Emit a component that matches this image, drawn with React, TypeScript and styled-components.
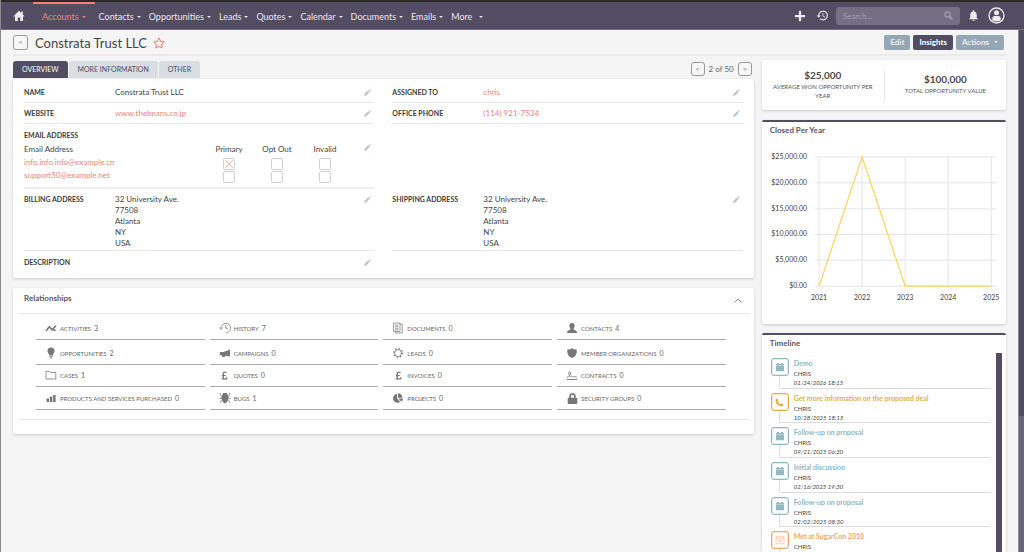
import React from "react";
import styled, { createGlobalStyle } from "styled-components";
import { FaPoundSign, FaLock, FaRegStar, FaChartPie, FaPlus, FaPhoneAlt } from "react-icons/fa";
import { MdHistory, MdNotifications } from "react-icons/md";

const PLUM = "#534d64";
const CORAL = "#f08377";
const INK = "#444444";
const LINE = "#e6e6e6";

const GlobalStyle = createGlobalStyle`
  *, *::before, *::after { box-sizing: border-box; }
  body {
    margin: 0;
    overflow: hidden;
    background: #f5f5f5;
    color: ${INK};
    font-family: Lato, "Liberation Sans", sans-serif;
    font-size: 8px;
  }
  a { color: ${CORAL}; text-decoration: none; }
  button, input { font-family: inherit; margin: 0; }
  h1, h2, ul, dl, dd, p { margin: 0; padding: 0; }
  ul { list-style: none; }
  svg { display: block; flex: none; }
`;

const Screen = styled.div`
  display: flex;
  flex-direction: column;
  height: 100vh;
  border-left: 1px solid #8c8a8c;
`;

const NavBar = styled.nav`
  display: flex;
  align-items: stretch;
  height: 30px;
  padding: 0 19px 0 12px;
  background: ${PLUM};
  border-top: 2px solid #2b2a29;
  border-bottom: 1px solid #756f88;
  flex: none;
`;

const HomeLink = styled.a`
  display: flex;
  align-items: center;
  width: 20px;
  color: #ececf0;
`;

const NavLink = styled.a<{ $active?: boolean; $wide?: boolean }>`
  display: flex;
  align-items: center;
  gap: ${(p) => (p.$wide ? 7 : 3)}px;
  padding: ${(p) => (p.$active ? "0 9px" : "2px 0 0")};
  margin-right: ${(p) => (p.$active ? 4 : 8)}px;
  border-top: ${(p) => (p.$active ? `2px solid ${CORAL}` : "0")};
  color: ${(p) => (p.$active ? CORAL : "#e8e7ec")};
  font-size: 9px;
`;

const Caret = styled.span`
  border: 2px solid transparent;
  border-top-color: currentColor;
  border-bottom: 0;
`;

const NavTools = styled.div`
  display: flex;
  align-items: center;
  margin-left: auto;
  color: #ececf0;
`;

const IconButton = styled.button<{ $gap?: number }>`
  display: flex;
  padding: 0;
  border: 0;
  background: none;
  color: inherit;
  margin-right: ${(p) => p.$gap ?? 0}px;
`;

const SearchBox = styled.form`
  display: flex;
  align-items: center;
  width: 124px;
  height: 18px;
  margin-right: 7px;
  padding: 0 7px;
  border-radius: 3px;
  background: #756f83;
  color: #a5a0b0;
`;

const SearchInput = styled.input`
  flex: 1;
  min-width: 0;
  border: 0;
  padding: 0;
  background: none;
  color: #fff;
  font-size: 8px;
  &::placeholder { color: #a39eae; }
`;

const Body = styled.div`
  display: flex;
  flex: 1;
  min-height: 0;
`;

const PageScroll = styled.div`
  width: 6px;
  background: #696478;
  border-left: 1px solid #8b869a;
`;

const PageThumb = styled.div`
  height: 74%;
  background: ${PLUM};
`;

const Content = styled.main`
  display: flex;
  flex-direction: column;
  flex: 1;
  min-width: 0;
  padding: 0 12px;
`;

const TitleRow = styled.header`
  display: flex;
  align-items: center;
  height: 26px;
  padding-right: 2px;
  border-bottom: 2px solid #ebebeb;
  flex: none;
`;

const SquareButton = styled.button<{ $size: number }>`
  width: ${(p) => p.$size}px;
  height: ${(p) => p.$size}px;
  padding: 0 0 1px;
  border: 1px solid #999;
  border-radius: 3px;
  background: #f7f7f7;
  color: #777;
  font-size: 7px;
  line-height: 8px;
`;

const Title = styled.h1`
  margin: 0 6px 0 7px;
  padding-top: 2px;
  font-size: 13px;
  font-weight: 400;
  line-height: 16px;
`;

const Star = styled(FaRegStar)`
  margin-top: 2px;
`;

const TitleActions = styled.div`
  display: flex;
  gap: 3px;
  margin-left: auto;
`;

const ActionButton = styled.button<{ $dark?: boolean }>`
  display: flex;
  align-items: center;
  gap: 5px;
  height: 15px;
  padding: 0 6px 1px;
  border: 0;
  border-radius: 2px;
  background: ${(p) => (p.$dark ? PLUM : "#95a6b4")};
  color: ${(p) => (p.$dark ? "#fff" : "#e9eef2")};
  font-size: 8px;
  font-weight: 700;
`;

const Columns = styled.div`
  display: grid;
  grid-template-columns: minmax(0, 752fr) minmax(0, 248fr);
  gap: 8px;
  flex: 1;
  min-height: 0;
  padding-top: 4px;
`;

const Column = styled.div`
  display: flex;
  flex-direction: column;
  min-height: 0;
`;

const TabRow = styled.div`
  display: flex;
  align-items: flex-end;
  height: 18px;
  margin-top: 1px;
  gap: 1px;
`;

const Tab = styled.button<{ $active?: boolean }>`
  height: 17px;
  align-self: flex-start;
  padding: 0 9px 2px;
  border: 0;
  border-radius: 3px 3px 0 0;
  background: ${(p) => (p.$active ? PLUM : "#d8dee2")};
  color: ${(p) => (p.$active ? "#fff" : PLUM)};
  font-size: 7px;
`;

const Pager = styled.div`
  display: flex;
  align-items: center;
  align-self: flex-start;
  gap: 4px;
  margin: 1px 2px 0 auto;
  color: #666;
  font-size: 8px;
`;

const Card = styled.section`
  background: #fff;
  border-radius: 2px;
  box-shadow: 0 1px 3px rgba(0, 0, 0, 0.18);
`;

const DetailCard = styled(Card)`
  display: grid;
  grid-template-columns: 1fr 1fr;
  column-gap: 18px;
  padding: 0 11px 5px;
  margin-bottom: 10px;
`;

const fieldPadding = {
  first: "8px 3px 4px 0",
  middle: "5px 3px 4px 0",
  block: "5px 3px 1px 0",
  last: "6px 3px 0 0",
};

const Field = styled.div<{ $kind: keyof typeof fieldPadding }>`
  display: grid;
  grid-template-columns: 91px 1fr 10px;
  padding: ${(p) => fieldPadding[p.$kind]};
  border-bottom: ${(p) => (p.$kind === "last" ? "0" : `1px solid ${LINE}`)};
  line-height: 11px;
  min-height: ${(p) => (p.$kind === "last" ? 22 : 21)}px;
`;

const Label = styled.span`
  font-size: 7px;
  font-weight: 700;
  color: #3c3c3c;
`;

const Value = styled.div`
  font-size: 8px;
  color: ${INK};
`;

const EditMark = styled.button`
  display: flex;
  justify-content: flex-end;
  align-items: center;
  height: 11px;
  padding: 0;
  border: 0;
  background: none;
  color: #bcc5cc;
`;

const EmailBlock = styled.div`
  display: grid;
  grid-template-columns: 1fr 10px;
  align-items: start;
  padding: 5px 3px 0 0;
  height: 65px;
  border-bottom: 2px solid #eeeeee;
  line-height: 12px;
`;

const EmailMark = styled(EditMark)`
  margin-top: 13px;
`;

const EmailTable = styled.table`
  width: 325px;
  table-layout: fixed;
  border-collapse: collapse;
  font-size: 8px;
  th, td { padding: 0; font-weight: 400; height: 13px; text-align: center; }
  th { height: 17px; line-height: 17px; }
  td { line-height: 9px; vertical-align: top; }
  th:first-child, td:first-child { text-align: left; width: 181px; }
`;

const Tick = styled.input`
  appearance: none;
  display: block;
  width: 12px;
  height: 12px;
  margin: 0 auto;
  border: 1px solid #cfcfd6;
  border-radius: 2px;
  background: #fff;
  &:checked {
    background:
      linear-gradient(45deg, transparent 45%, #f7b3ab 45% 55%, transparent 55%) center / 8px 8px no-repeat,
      linear-gradient(-45deg, transparent 45%, #f7b3ab 45% 55%, transparent 55%) center / 8px 8px no-repeat;
  }
`;

const RelCard = styled(Card)`
  padding: 0 5px;
  height: 146px;
`;

const RelHead = styled.header`
  display: flex;
  align-items: flex-start;
  justify-content: space-between;
  height: 26px;
  padding: 5px 7px 0 6px;
  border-bottom: 1px solid ${LINE};
`;

const Heading = styled.h2`
  font-size: 8px;
  font-weight: 700;
  line-height: 10px;
  color: #5a556b;
`;

const RelToggle = styled(IconButton)`
  margin-top: 5px;
`;

const RelGrid = styled.ul`
  display: grid;
  grid-template-columns: repeat(4, 1fr);
  grid-template-rows: 26px 25px 22px 23px;
  column-gap: 5px;
  padding: 0 23px 9px 18px;
  border-bottom: 1px solid ${LINE};
`;

const RelItem = styled.li`
  display: flex;
  align-items: flex-end;
  padding: 0 0 5px 9px;
  border-bottom: 1px solid #ababab;
`;

const RelLink = styled.a`
  display: flex;
  align-items: center;
  gap: 3px;
  height: 12px;
  color: #666;
  font-size: 6px;
`;

const RelCount = styled.span`
  font-size: 7px;
`;

const RelIcon = styled.span`
  display: flex;
  justify-content: center;
  width: 12px;
  color: #777;
`;

const StatCard = styled(Card)`
  display: grid;
  grid-template-columns: 1fr 1fr;
  align-items: center;
  height: 50px;
  margin-bottom: 10px;
`;

const Stat = styled.div`
  display: flex;
  flex-direction: column;
  justify-content: center;
  height: 33px;
  padding: 0 8px 2px;
  text-align: center;
  & + & { border-left: 1px solid #e8e8e8; }
`;

const StatValue = styled.strong`
  font-size: 10px;
  line-height: 13px;
  color: #4b4b4b;
`;

const StatLabel = styled.span`
  font-size: 6px;
  line-height: 9px;
  color: #555;
`;

const WidgetCard = styled(Card)<{ $fill?: boolean }>`
  display: flex;
  flex-direction: column;
  padding: 3px 4px 0 8px;
  border-top: 2px solid ${PLUM};
  ${(p) => (p.$fill ? "flex: 1; min-height: 0;" : "height: 204px; margin-bottom: 9px;")}
`;

const ChartBox = styled.div`
  margin-top: 17px;
`;

const ChartSvg = styled.svg`
  width: 100%;
  height: auto;
  text { font-family: inherit; font-size: 7px; fill: #444; }
`;

const Timeline = styled.div`
  display: flex;
  justify-content: space-between;
  flex: 1;
  min-height: 0;
  margin-top: 5px;
  overflow: hidden;
`;

const TimelineList = styled.ul`
  display: grid;
  flex: 1;
  grid-auto-rows: 35px 34px 35px;
  padding: 5px 5px 0 1px;
`;

const TimelineScroll = styled.div`
  width: 6px;
  background: ${PLUM};
`;

const Event = styled.li`
  display: flex;
  padding-bottom: 4px;
`;

const EventRail = styled.div`
  display: flex;
  flex-direction: column;
  width: 23px;
`;

const EventIcon = styled.span<{ $color: string }>`
  display: flex;
  align-items: center;
  justify-content: center;
  width: 18px;
  height: 18px;
  border: 1px solid ${(p) => p.$color};
  border-radius: 3px;
  box-shadow: inset 0 0 0 1px ${(p) => p.$color}44;
  color: ${(p) => p.$color};
  flex: none;
`;

const Connector = styled.span`
  flex: 1;
  margin-left: 8px;
  border: solid #dcdcdc;
  border-width: 0 0 1px 1px;
  border-bottom-left-radius: 2px;
`;

const EventBody = styled.div`
  flex: 1;
  border-bottom: 1px solid #dcdcdc;
  font-size: 6px;
  line-height: 9px;
  time { display: block; font-style: italic; }
`;

const EventTitle = styled.a<{ $color: string }>`
  display: block;
  font-size: 7px;
  font-weight: 700;
  line-height: 11px;
  color: ${(p) => p.$color};
`;

const stroke = { fill: "none", stroke: "currentColor" } as const;

const HomeIcon = () => (
  <svg width="12" height="12" viewBox="0 0 12 12" fill="currentColor">
    <path d="M6 .8 8.200 3V1.600h1.600v3L11.600 6.600H10V11H7.200V7.500H4.800V11H2V6.600H.4z" />
  </svg>
);

const UserIcon = () => (
  <svg width="17" height="17" viewBox="0 0 17 17">
    <circle cx="8.500" cy="8.500" r="7.500" {...stroke} strokeWidth="1.300" />
    <circle cx="8.500" cy="5.800" r="2.500" fill="currentColor" />
    <path d="M4.300 13.200V11.400Q4.300 8.900 6.800 8.900H10.200Q12.700 8.900 12.700 11.400V13.200Q8.500 16 4.300 13.200z" fill="currentColor" />
  </svg>
);

const SearchIcon = () => (
  <svg width="9" height="9" viewBox="0 0 9 9" {...stroke}>
    <circle cx="3.500" cy="3.500" r="2.600" strokeWidth="1.200" />
    <path d="M5.500 5.500 8.300 8.300" strokeWidth="1.700" />
  </svg>
);

const ChevronUp = () => (
  <svg width="8" height="5" viewBox="0 0 8 5" {...stroke} stroke="#888">
    <path d="M.5 4.500 4 1l3.500 3.500" />
  </svg>
);

const PencilIcon = () => (
  <svg width="7" height="7" viewBox="0 0 7 7" fill="currentColor">
    <path d="M4.200 1.200 5.800 2.800 2.200 6.400 0 7 .6 4.800zM4.700.7 5.400 0 7 1.600 6.300 2.300z" />
  </svg>
);

const CalendarIcon = () => (
  <svg width="10" height="10" viewBox="0 0 10 10" fill="currentColor">
    <path d="M1 2H2V1H4V2H6V1H8V2H9V9.200H1z" />
    <path d="M1 3.600H9" stroke="#fff" strokeWidth=".4" />
  </svg>
);

const MeetingIcon = () => (
  <svg width="10" height="10" viewBox="0 0 10 10" {...stroke} strokeWidth=".7" opacity=".75">
    <path d="M1 1.700H9V8.800H1zM1 3.200H9M2.700 1.700V.6M7.300 1.700V.6M2.500 5H7.500M2.500 6.800H7.500" />
  </svg>
);

const icons: Record<string, React.ReactNode> = {
  activities: <path d="M1 9 4.300 4.800 7 7.800 11 3.800M7.500 7.300 10.600 8.700" {...stroke} strokeWidth="1.600" />,
  history: (
    <g {...stroke} strokeWidth=".8">
      <path d="M2 6A4.800 4.800 0 1 1 6.800 11M6.800 3V6.300H9M.3 5.500 2 7.500 3.800 5.500" />
    </g>
  ),
  documents: (
    <g {...stroke} strokeWidth=".7">
      <path d="M1.500 1H8V9.500H1.500zM8 2.300H10.300V11H3.500V9.500M3 3H6.500M3 4.700H6.500M3 6.300H6.500M3 7.900H6.500" />
    </g>
  ),
  contacts: (
    <path d="M6 1C8.300 1 9 3 8.500 4.800 8.200 6 7.500 6.600 7.500 7.500 8.500 8.200 11 8.300 11 11H1C1 8.300 3.500 8.200 4.500 7.500 4.500 6.600 3.800 6 3.500 4.800 3 3 3.700 1 6 1z" />
  ),
  opportunities: <path d="M6 .5A3.500 3.500 0 0 1 9.500 4C9.500 5.800 7.900 6.600 7.900 8.600H4.100C4.100 6.600 2.500 5.800 2.500 4A3.500 3.500 0 0 1 6 .5zM4.200 9.200H7.800V10.200H4.200zM4.800 10.700H7.200L6.600 11.500H5.400z" />,
  campaigns: <path d="M11 2.500V9.500L6 8.800V10H3L2.800 8.300H.8V5H4.500z" />,
  leads: (
    <g {...stroke}>
      <circle cx="6" cy="6" r="3.500" strokeWidth=".9" />
      <circle cx="6" cy="6" r="4.500" strokeWidth="1.400" strokeDasharray="1.200 2.334" />
    </g>
  ),
  members: <path d="M6 1 7.500 2.200 10.500 2.500 10.800 4.500C10.500 8 9 10 6 11 3 10 1.500 8 1.200 4.500L1.500 2.500 4.500 2.200z" />,
  cases: <path d="M1 10V2.300H4.500L5.500 3.500H10.800V10z" {...stroke} strokeWidth=".8" />,
  contracts: <path d="M.8 10.500H11.200M.8 8.300C3 8.300 5.200 5.500 4.500 3.500 3.800 1.500 2.300 3.500 3 5.500 3.500 7.500 4.500 8.300 5.300 7.300 6.200 6 6.500 8.500 7.500 7.800 8.500 7 9 8.500 10.800 8" {...stroke} strokeWidth=".9" />,
  products: <path d="M1.500 6.500H4V10H1.500zM4.800 4.500H7.300V10H4.800zM8.100 3H10.600V10H8.100z" />,
  bugs: (
    <g>
      <path d="M3.200 3 4.300 1H7.700L8.800 3C10.500 5 9.600 9.500 6 11.600 2.400 9.500 1.500 5 3.200 3z" />
      <path d="M2.800 4.500 1.200 3V1M9.200 4.500 10.800 3V1M2.600 6.500H.6M9.400 6.500H11.400M3 8.300 1.300 9.500V11M9 8.300 10.700 9.500V11" {...stroke} strokeWidth=".7" />
    </g>
  ),
};

const DrawnIcon = ({ name }: { name: string }) => (
  <svg width="12" height="12" viewBox="0 0 12 12" fill="currentColor">{icons[name]}</svg>
);

const relations: [React.ReactNode, string, number][] = [
  [<DrawnIcon name="activities" />, "ACTIVITIES", 3],
  [<DrawnIcon name="history" />, "HISTORY", 7],
  [<DrawnIcon name="documents" />, "DOCUMENTS", 0],
  [<DrawnIcon name="contacts" />, "CONTACTS", 4],
  [<DrawnIcon name="opportunities" />, "OPPORTUNITIES", 2],
  [<DrawnIcon name="campaigns" />, "CAMPAIGNS", 0],
  [<DrawnIcon name="leads" />, "LEADS", 0],
  [<DrawnIcon name="members" />, "MEMBER ORGANIZATIONS", 0],
  [<DrawnIcon name="cases" />, "CASES", 1],
  [<FaPoundSign size={9} />, "QUOTES", 0],
  [<FaPoundSign size={9} />, "INVOICES", 0],
  [<DrawnIcon name="contracts" />, "CONTRACTS", 0],
  [<DrawnIcon name="products" />, "PRODUCTS AND SERVICES PURCHASED", 0],
  [<DrawnIcon name="bugs" />, "BUGS", 1],
  [<FaChartPie size={10} />, "PROJECTS", 0],
  [<FaLock size={11} />, "SECURITY GROUPS", 0],
];

const TEAL = "#8fb8c0";
const GOLD = "#e0b040";
const ORANGE = "#f5a46c";

const events: [string, string, string | null, React.ReactNode][] = [
  ["Demo", TEAL, "01/24/2026 18:15", <CalendarIcon />],
  ["Get more information on the proposed deal", GOLD, "10/28/2025 18:15", <PhoneIcon />],
  ["Follow-up on proposal", TEAL, "09/21/2025 06:30", <CalendarIcon />],
  ["Initial discussion", TEAL, "02/16/2025 19:30", <CalendarIcon />],
  ["Follow-up on proposal", TEAL, "02/02/2025 08:30", <CalendarIcon />],
  ["Met at SugarCon 2010", ORANGE, null, <MeetingIcon />],
];

function PhoneIcon() {
  return (
    <svg width="9" height="9" viewBox="0 0 9 9" fill="currentColor">
      <path d="M.6 1.400 2.200.5Q2.600.4 2.800.8L3.600 2.500Q3.700 2.900 3.400 3.100L2.700 3.700Q3.500 5.400 5.200 6.300L5.900 5.600Q6.200 5.300 6.500 5.400L8.200 6.200Q8.600 6.400 8.500 6.800L7.700 8.300Q7.400 8.600 6.900 8.600 .8 7.700 .4 2 .4 1.600 .6 1.400z" />
    </svg>
  );
}

const modules = ["Contacts", "Opportunities", "Leads", "Quotes", "Calendar", "Documents", "Emails"];

const Pencil = () => (
  <EditMark aria-label="Edit field">
    <PencilIcon />
  </EditMark>
);

const address = ["32 University Ave.", "77508", "Atlanta", "NY", "USA"];

function ClosedPerYear() {
  const values = [0, 25000, 0, 0, 0];
  const x = (i: number) => 49 + i * 43;
  const y = (v: number) => 134 - (v / 25000) * 129;
  return (
    <ChartSvg viewBox="0 0 232 152" role="img" aria-label="Closed Per Year">
      {[0, 5000, 10000, 15000, 20000, 25000].map((v) => (
        <g key={v}>
          <line x1="45" x2="226" y1={y(v)} y2={y(v)} stroke="#e4e4e4" />
          <text x="37" y={y(v) + 2} textAnchor="end">{`$${v.toLocaleString("en-US")}.00`}</text>
        </g>
      ))}
      {values.map((_, i) => (
        <g key={i}>
          <line x1={x(i)} x2={x(i)} y1="5" y2="134" stroke="#e4e4e4" />
          <text x={x(i)} y="148" textAnchor="middle">{2021 + i}</text>
        </g>
      ))}
      <polyline points={values.map((v, i) => `${x(i)},${y(v)}`).join(" ")} fill="none" stroke="#fbd45c" strokeWidth="1.200" />
    </ChartSvg>
  );
}

export default function App() {
  return (
    <Screen>
      <GlobalStyle />
      <NavBar>
        <HomeLink href="#" aria-label="Home"><HomeIcon /></HomeLink>
        <NavLink href="#" $active>Accounts<Caret /></NavLink>
        {modules.map((m) => (
          <NavLink href="#" key={m}>{m}<Caret /></NavLink>
        ))}
        <NavLink href="#" $wide>More<Caret /></NavLink>
        <NavTools>
          <IconButton $gap={10} aria-label="Create"><FaPlus size={12} /></IconButton>
          <IconButton $gap={7} aria-label="Recently viewed"><MdHistory size={13} /></IconButton>
          <SearchBox>
            <SearchInput placeholder="Search..." aria-label="Search" />
            <SearchIcon />
          </SearchBox>
          <IconButton $gap={8} aria-label="Notifications"><MdNotifications size={13} /></IconButton>
          <IconButton aria-label="Profile"><UserIcon /></IconButton>
        </NavTools>
      </NavBar>
      <Body>
        <Content>
          <TitleRow>
            <SquareButton $size={15} aria-label="Back">&lt;</SquareButton>
            <Title>Constrata Trust LLC</Title>
            <Star size={12} color={CORAL} />
            <TitleActions>
              <ActionButton>Edit</ActionButton>
              <ActionButton $dark>Insights</ActionButton>
              <ActionButton>Actions<Caret /></ActionButton>
            </TitleActions>
          </TitleRow>
          <Columns>
            <Column>
              <TabRow>
                <Tab $active>OVERVIEW</Tab>
                <Tab>MORE INFORMATION</Tab>
                <Tab>OTHER</Tab>
                <Pager>
                  <SquareButton $size={14} aria-label="Previous">&lt;</SquareButton>
                  <span>2 of 50</span>
                  <SquareButton $size={14} aria-label="Next">&gt;</SquareButton>
                </Pager>
              </TabRow>
              <DetailCard>
                <Field $kind="first"><Label>NAME</Label><Value>Constrata Trust LLC</Value><Pencil /></Field>
                <Field $kind="first"><Label>ASSIGNED TO</Label><Value><a href="#">chris</a></Value><Pencil /></Field>
                <Field $kind="middle"><Label>WEBSITE</Label><Value><a href="#">www.thebeans.co.jp</a></Value><Pencil /></Field>
                <Field $kind="middle"><Label>OFFICE PHONE</Label><Value><a href="#">(114) 921-7534</a></Value><Pencil /></Field>
                <EmailBlock>
                  <div>
                    <Label>EMAIL ADDRESS</Label>
                    <EmailTable>
                      <thead>
                        <tr><th>Email Address</th><th>Primary</th><th>Opt Out</th><th>Invalid</th></tr>
                      </thead>
                      <tbody>
                        {["info.info.info@example.cn", "support50@example.net"].map((mail, i) => (
                          <tr key={mail}>
                            <td><a href="#">{mail}</a></td>
                            <td><Tick type="checkbox" defaultChecked={i === 0} aria-label={`${mail} primary`} /></td>
                            <td><Tick type="checkbox" aria-label={`${mail} opt out`} /></td>
                            <td><Tick type="checkbox" aria-label={`${mail} invalid`} /></td>
                          </tr>
                        ))}
                      </tbody>
                    </EmailTable>
                  </div>
                  <EmailMark aria-label="Edit field"><PencilIcon /></EmailMark>
                </EmailBlock>
                <div />
                {["BILLING ADDRESS", "SHIPPING ADDRESS"].map((label) => (
                  <Field $kind="block" key={label}>
                    <Label>{label}</Label>
                    <Value>{address.map((line) => <div key={line}>{line}</div>)}</Value>
                    <Pencil />
                  </Field>
                ))}
                <Field $kind="last"><Label>DESCRIPTION</Label><Value /><Pencil /></Field>
              </DetailCard>
              <RelCard>
                <RelHead>
                  <Heading>Relationships</Heading>
                  <RelToggle aria-label="Collapse"><ChevronUp /></RelToggle>
                </RelHead>
                <RelGrid>
                  {relations.map(([icon, name, count]) => (
                    <RelItem key={name}>
                      <RelLink href="#"><RelIcon>{icon}</RelIcon><span>{name}</span><RelCount>{count}</RelCount></RelLink>
                    </RelItem>
                  ))}
                </RelGrid>
              </RelCard>
            </Column>
            <Column>
              <StatCard>
                <Stat><StatValue>$25,000</StatValue><StatLabel>AVERAGE WON OPPORTUNITY PER YEAR</StatLabel></Stat>
                <Stat><StatValue>$100,000</StatValue><StatLabel>TOTAL OPPORTUNITY VALUE</StatLabel></Stat>
              </StatCard>
              <WidgetCard>
                <Heading>Closed Per Year</Heading>
                <ChartBox><ClosedPerYear /></ChartBox>
              </WidgetCard>
              <WidgetCard $fill>
                <Heading>Timeline</Heading>
                <Timeline>
                  <TimelineList>
                    {events.map(([title, color, date, icon], i) => (
                      <Event key={i}>
                        <EventRail><EventIcon $color={color}>{icon}</EventIcon><Connector /></EventRail>
                        <EventBody>
                          <EventTitle href="#" $color={color}>{title}</EventTitle>
                          <span>CHRIS</span>
                          {date && <time>{date}</time>}
                        </EventBody>
                      </Event>
                    ))}
                  </TimelineList>
                  <TimelineScroll />
                </Timeline>
              </WidgetCard>
            </Column>
          </Columns>
        </Content>
        <PageScroll><PageThumb /></PageScroll>
      </Body>
    </Screen>
  );
}
